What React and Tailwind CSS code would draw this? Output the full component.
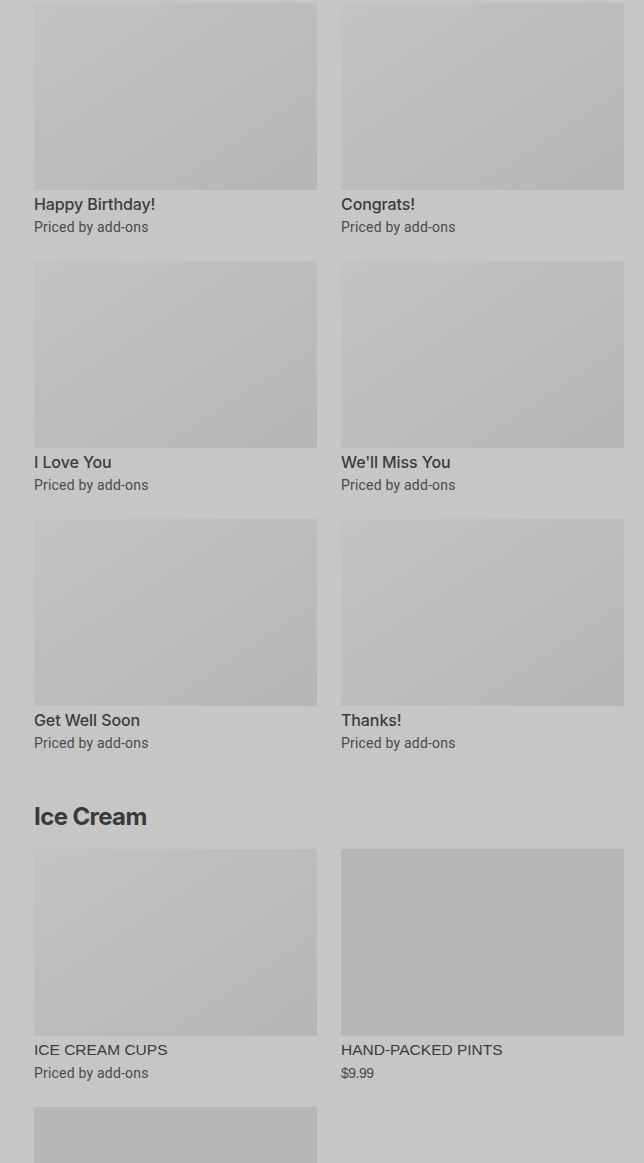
import React from "react";

const cards = [
  { title: "Happy Birthday!", price: "Priced by add-ons" },
  { title: "Congrats!", price: "Priced by add-ons" },
  { title: "I Love You", price: "Priced by add-ons" },
  { title: "We'll Miss You", price: "Priced by add-ons" },
  { title: "Get Well Soon", price: "Priced by add-ons" },
  { title: "Thanks!", price: "Priced by add-ons" },
];

function Card({ title, price, flat, upper }) {
  return (
    <div className="flex flex-col">
      <div
        className={
          flat
            ? "h-[187px] w-full bg-[#b7b7b7]"
            : "h-[187px] w-full bg-gradient-to-br from-[#c3c3c3] via-[#bcbcbc] to-[#b6b6b6]"
        }
      />
      {upper ? (
        <div className="mt-[4px] text-[15.5px] leading-5 text-[#3c3c3c] font-['Liberation_Sans',Arial,sans-serif]">
          {title}
        </div>
      ) : (
        <div className="mt-[4px] text-[16px] leading-5 font-medium text-[#3c3c3c] font-['Inter',sans-serif] tracking-[-0.1px]">
          {title}
        </div>
      )}
      <div
        className={
          upper && price.startsWith("$")
            ? "mt-[3px] text-[14px] leading-5 text-[#4a4a4a] font-['Liberation_Sans',Arial,sans-serif] tracking-[-0.5px]"
            : "mt-[3px] text-[14px] leading-5 text-[#4a4a4a] font-['Roboto',sans-serif] tracking-[0.2px]"
        }
      >
        {price}
      </div>
    </div>
  );
}

export default function App() {
  return (
    <div className="w-full bg-[#c6c6c6] pl-[34px] pr-[20px] pt-[3px] overflow-hidden h-[1163px]">
      <div className="grid grid-cols-2 gap-x-6 gap-y-6">
        {cards.map((c) => (
          <Card key={c.title} title={c.title} price={c.price} />
        ))}
      </div>

      <h2 className="mt-[48px] mb-[16px] text-[24px] leading-8 font-bold text-[#3a3a3a] font-['Inter',sans-serif] tracking-[-0.6px]">
        Ice Cream
      </h2>

      <div className="grid grid-cols-2 gap-x-6 gap-y-6">
        <Card title="ICE CREAM CUPS" price="Priced by add-ons" upper />
        <Card title="HAND-PACKED PINTS" price="$9.99" upper flat />
        <div className="h-[187px] w-full bg-[#b7b7b7]" />
      </div>
    </div>
  );
}
